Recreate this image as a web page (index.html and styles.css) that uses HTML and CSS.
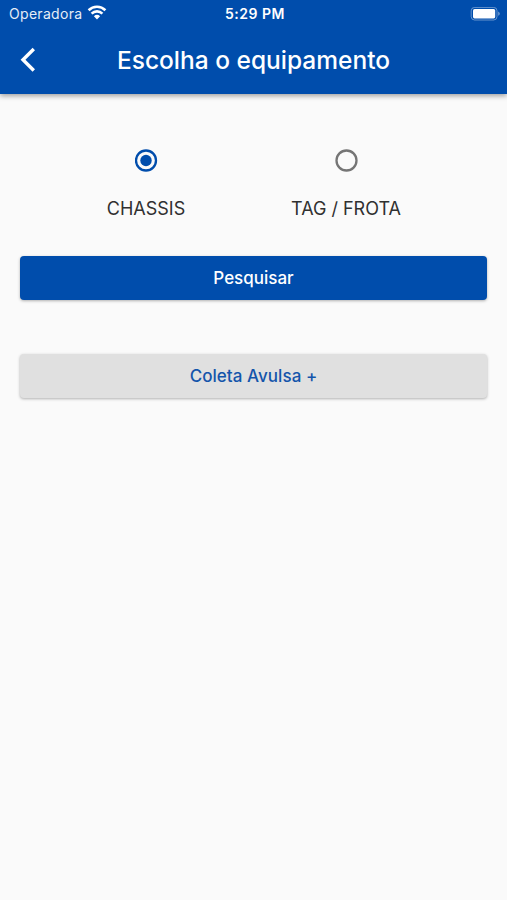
FILE: index.html
```html
<!DOCTYPE html>
<html lang="pt-BR">
<head>
<meta charset="utf-8">
<meta name="viewport" content="width=device-width, initial-scale=1">
<title>Escolha o equipamento</title>
<link rel="stylesheet" href="styles.css">
</head>
<body>
<header class="header">
  <div class="status">
    <div class="carrier"><span class="carrier-name">Operadora</span>
      <svg class="wifi" viewBox="0 0 20 15" width="20" height="15"><path d="M1.6 5.2a12 12 0 0 1 16.8 0M4.6 8.6a7.7 7.7 0 0 1 10.8 0" fill="none" stroke="#fff" stroke-width="2.6"/><path d="M6.9 11.2a4.5 4.5 0 0 1 6.2 0L10 14.4z" fill="#fff"/></svg>
    </div>
    <span class="time">5:29 PM</span>
    <svg class="battery" viewBox="0 0 31 14" width="31" height="14"><rect x="1.2" y=".4" width="25.8" height="12.6" rx="3.4" fill="none" stroke="#fff" stroke-opacity=".4"/><rect x="3" y="2" width="22.2" height="9.4" rx="1.6" fill="#fff"/><path d="M28.2 4.6q1.6.7 1.6 2.1t-1.6 2.1z" fill="#fff" fill-opacity=".45"/></svg>
  </div>
  <div class="bar">
    <svg class="back" viewBox="0 0 16 26" width="16" height="26"><path d="M13.8 2 3 12.7l10.8 10.8" fill="none" stroke="#fff" stroke-width="3.4"/></svg>
    <h1 class="title">Escolha o equipamento</h1>
  </div>
</header>
<main class="content">
  <div class="options">
    <label class="option"><svg class="radio radio-on" viewBox="0 0 23 23" width="23" height="23"><circle class="ring" cx="11" cy="11.5" r="10"/><circle class="dot" cx="11" cy="11.5" r="5.7"/></svg><span class="option-name chassis">CHASSIS</span></label>
    <label class="option"><svg class="radio" viewBox="0 0 23 23" width="23" height="23"><circle class="ring" cx="11.5" cy="11.5" r="10"/></svg><span class="option-name tag">TAG / FROTA</span></label>
  </div>
  <button class="button primary"><span>Pesquisar</span></button>
  <button class="button secondary"><span>Coleta Avulsa +</span></button>
</main>
</body>
</html>
```
FILE: styles.css
```css
* { box-sizing: border-box; }
body { margin: 0; min-height: 900px; background: #fafafa; font-family: Inter, sans-serif; }
.header { height: 94px; background: #004dac; color: #fff; box-shadow: 0 2px 5px rgba(0,0,0,.36); }
.status { height: 27px; padding: 0 6px 0 9px; display: grid; grid-template-columns: 1fr auto 1fr; align-items: center; }
.carrier { display: flex; align-items: center; gap: 5px; }
.wifi { transform: translateY(-1px); }
.carrier-name { font-size: 14px; letter-spacing: .3px; opacity: .9; }
.time { font-size: 14px; font-weight: 600; letter-spacing: .5px; }
.battery { justify-self: end; }
.bar { height: 66px; padding: 0 20px; display: grid; grid-template-columns: 16px 1fr 16px; align-items: center; }
.title { margin: 0; text-align: center; font-size: 24.5px; font-weight: 500; line-height: 30px; white-space: nowrap; }
.content { padding: 55px 20px 0; }
.options { display: grid; grid-template-columns: 200px 200px; padding-left: 26px; }
.option { display: flex; flex-direction: column; align-items: center; gap: 26px; }
.ring { fill: none; stroke: #757575; stroke-width: 2.3; }
.radio-on .ring { stroke: #004dac; }
.dot { fill: #004dac; }
.option-name { font-size: 18px; line-height: 22px; color: #303030; white-space: nowrap; }
.button { display: flex; width: 100%; align-items: center; justify-content: center; height: 44px; padding: 0; border: 0; border-radius: 4px; font: 500 17px/22px Inter, sans-serif; box-shadow: 0 1px 3px rgba(0,0,0,.3); }
.primary { margin-top: 36px; background: #004dac; color: #fff; }
.secondary { margin-top: 54px; background: #e0e0e0; color: #1455ab; letter-spacing: .05px; }
```
